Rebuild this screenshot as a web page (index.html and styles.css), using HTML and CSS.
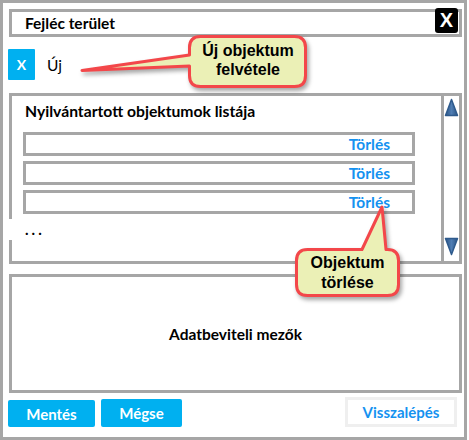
FILE: index.html
```html
<!DOCTYPE html>
<html lang="hu">
<head>
    <meta charset="UTF-8">
    <title>Objektumok</title>
    <link rel="stylesheet" href="styles.css">
</head>
<body>
    <div class="frame">
        <div class="header">
            <span>Fejléc terület</span>
            <div class="close">X</div>
        </div>

        <div class="add-row">
            <div class="add-btn">X</div>
            <span class="add-label">Új</span>
        </div>

        <div class="list">
            <div class="list-body">
                <div class="list-title">Nyilvántartott objektumok listája</div>
                <div class="row"><span class="del">Törlés</span></div>
                <div class="row"><span class="del">Törlés</span></div>
                <div class="row"><span class="del">Törlés</span></div>
                <div class="more"><span>.</span><span>.</span><span>.</span></div>
            </div>
            <div class="scroll">
                <svg class="arrow" width="15" height="19" viewBox="0 0 15 19">
                    <defs>
                        <linearGradient id="arrowFill" x1="0" y1="0" x2="1" y2="0">
                            <stop offset="0" stop-color="#2c5687"/>
                            <stop offset="0.5" stop-color="#4f7db3"/>
                            <stop offset="1" stop-color="#2c5687"/>
                        </linearGradient>
                    </defs>
                    <path d="M7.5 1.5 L13.5 17.5 L1.5 17.5 Z" fill="url(#arrowFill)" stroke="#2e5a8c" stroke-width="1.5" stroke-linejoin="round"/>
                </svg>
                <svg class="arrow" width="15" height="19" viewBox="0 0 15 19">
                    <path d="M1.5 1.5 L13.5 1.5 L7.5 17.5 Z" fill="url(#arrowFill)" stroke="#2e5a8c" stroke-width="1.5" stroke-linejoin="round"/>
                </svg>
            </div>
        </div>

        <div class="data">Adatbeviteli mezők</div>

        <div class="actions">
            <div class="btn">Mentés</div>
            <div class="btn btn-narrow">Mégse</div>
            <div class="btn-back">Visszalépés</div>
        </div>
    </div>

    <!-- note bubbles drawn over the form -->
    <svg class="notes" width="469" height="440" viewBox="0 0 469 440">
        <path class="bubble" d="M200.5 36.5 H294.5 Q305.5 36.5 305.5 47.5 V75.5 Q305.5 86.5 294.5 86.5 H200.5 Q189.5 86.5 189.5 75.5 V66 L82 70.5 L189.5 55 V47.5 Q189.5 36.5 200.5 36.5 Z"/>
        <path class="bubble" d="M307.5 249.5 H362 L382 207 L386 249.5 H387.5 Q398.5 249.5 398.5 260.5 V284.5 Q398.5 295.5 387.5 295.5 H307.5 Q296.5 295.5 296.5 284.5 V260.5 Q296.5 249.5 307.5 249.5 Z"/>
    </svg>
    <div class="note note-add">Új objektum<br>felvétele</div>
    <div class="note note-del">Objektum<br>törlése</div>
</body>
</html>
```

FILE: styles.css
```css
body {
    margin: 0;
    background: #fff;
    font-family: Lato, "Open Sans", sans-serif;
    color: #000;
}
.frame {
    position: relative;
    width: 467px;
    height: 440px;
    box-sizing: border-box;
    border: 3px solid #a6a6a6;
    padding: 6px 2px 0 6px;
    display: flex;
    flex-direction: column;
}
.header {
    position: relative;
    height: 28px;
    box-sizing: border-box;
    border: 3px solid #a6a6a6;
    padding-left: 13px;
    display: flex;
    align-items: center;
    font-weight: bold;
    font-size: 15.5px;
}
.close {
    position: absolute;
    top: -4px;
    right: 1px;
    width: 23px;
    height: 25px;
    background: #000;
    color: #fff;
    border-radius: 3px;
    font-family: "Liberation Sans", Arial, sans-serif;
    font-weight: bold;
    font-size: 20px;
    display: flex;
    align-items: center;
    justify-content: center;
}
.add-row {
    margin-top: 12px;
    height: 31px;
    display: flex;
    align-items: center;
    margin-left: -1px;
}
.add-btn {
    width: 27px;
    height: 31px;
    background: #00b0f0;
    color: #fff;
    border-radius: 1px;
    font-weight: bold;
    font-size: 14px;
    display: flex;
    align-items: center;
    justify-content: center;
}
.add-label {
    margin-left: 12px;
    font-size: 15.5px;
}
.list {
    margin-top: 13px;
    height: 171px;
    box-sizing: border-box;
    border: 3px solid #a6a6a6;
    display: flex;
}
.list-body {
    flex: 1;
    padding-top: 5px;
}
.list-title {
    padding-left: 13px;
    font-weight: bold;
    font-size: 15.7px;
    line-height: 20px;
    margin-bottom: 11px;
}
.row {
    margin-left: 11px;
    width: 392px;
    height: 24px;
    box-sizing: border-box;
    border: 3px solid #a6a6a6;
    margin-bottom: 5px;
    display: flex;
    align-items: center;
    justify-content: flex-end;
    padding-right: 22px;
}
.del {
    color: #1592f0;
    font-weight: bold;
    font-size: 15.5px;
}
.more {
    margin-top: 1px;
    margin-left: -3px;
    width: 60px;
    height: 21px;
    padding-left: 16px;
    background: #fff;
    display: flex;
    gap: 3px;
    font-weight: bold;
    font-size: 15px;
    line-height: 21px;
}
.scroll {
    width: 15px;
    border-left: 3px solid #a6a6a6;
    display: flex;
    flex-direction: column;
    justify-content: space-between;
    padding: 2px 0 5px;
}
.arrow {
    display: block;
}
.data {
    margin-top: 10px;
    height: 119px;
    box-sizing: border-box;
    border: 3px solid #a6a6a6;
    display: flex;
    align-items: center;
    justify-content: center;
    font-weight: bold;
    font-size: 15.5px;
}
.actions {
    margin-top: 4px;
    display: flex;
    align-items: flex-end;
    gap: 6px;
    margin-left: -1px;
}
.btn {
    width: 87px;
    height: 27px;
    background: #00b0f0;
    color: #fff;
    border-radius: 2px;
    font-weight: bold;
    font-size: 15px;
    display: flex;
    align-items: center;
    justify-content: center;
}
.btn-narrow {
    width: 81px;
    height: 28px;
}
.btn-back {
    margin-left: auto;
    margin-right: 5px;
    width: 112px;
    height: 30px;
    box-sizing: border-box;
    border: 3px solid #efefef;
    color: #1592f0;
    font-weight: bold;
    font-size: 15px;
    display: flex;
    align-items: center;
    justify-content: center;
}
.notes {
    position: absolute;
    left: 0;
    top: 0;
    pointer-events: none;
}
.bubble {
    fill: #ebf0b6;
    stroke: #f3474a;
    stroke-width: 3;
    stroke-linejoin: round;
    filter: drop-shadow(2px 3px 2px rgba(0, 0, 0, 0.35));
}
.note {
    position: absolute;
    display: flex;
    align-items: center;
    justify-content: center;
    text-align: center;
    font-family: "Liberation Sans", Arial, sans-serif;
    font-weight: bold;
    font-size: 16px;
    color: #000;
}
.note-add {
    left: 188px;
    top: 33px;
    width: 120px;
    height: 54px;
    line-height: 19px;
}
.note-del {
    left: 295px;
    top: 248px;
    width: 105px;
    height: 50px;
    line-height: 20px;
}
```
